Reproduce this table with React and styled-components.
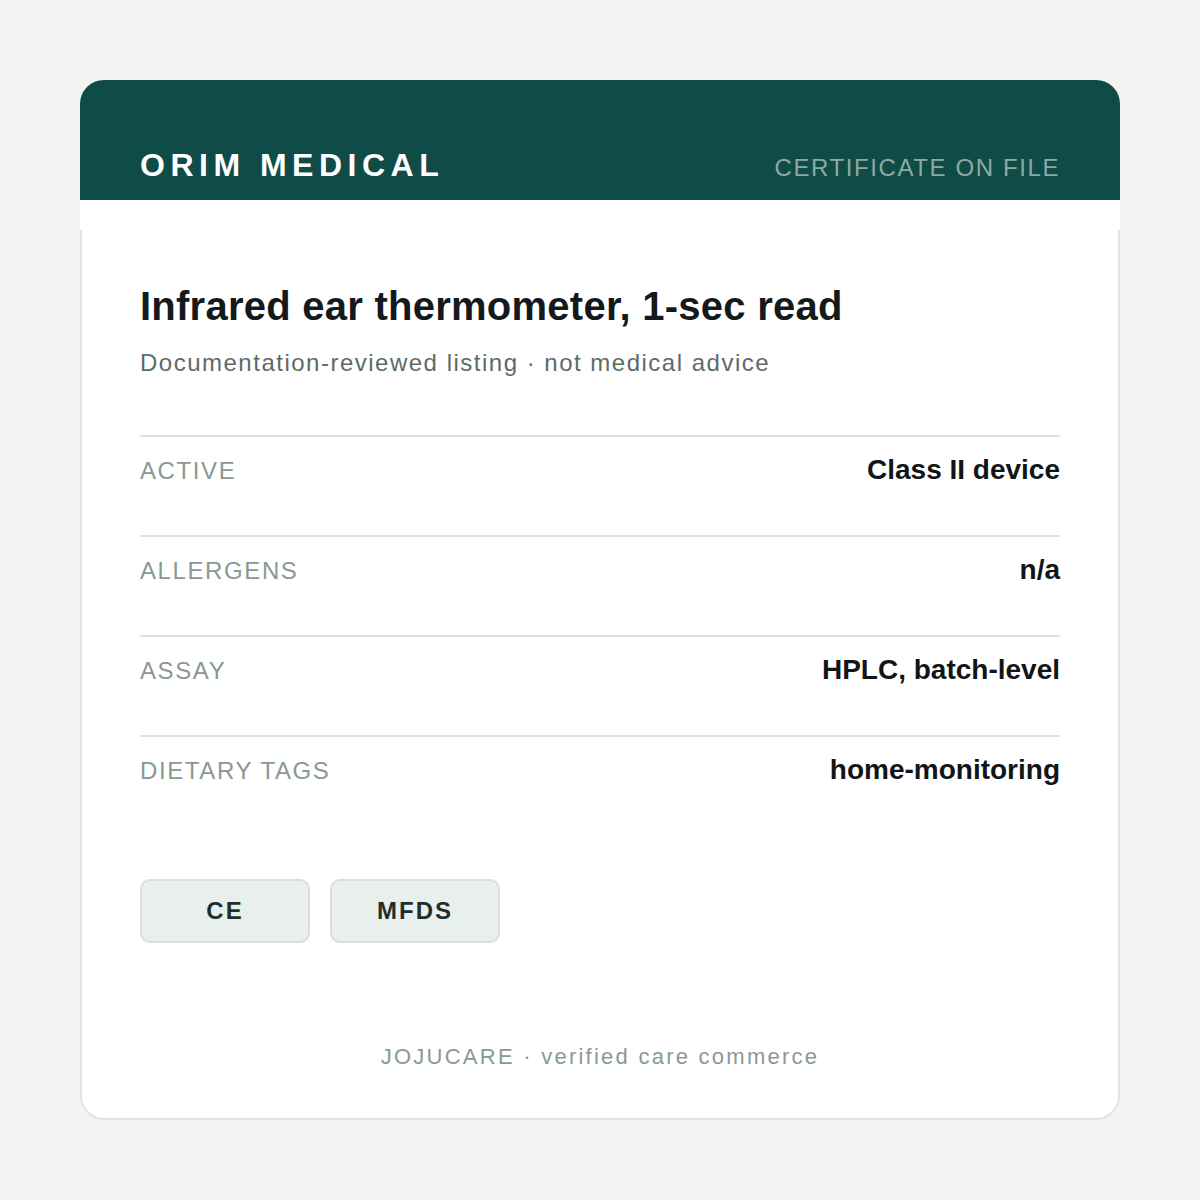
import React from 'react';
import styled, { createGlobalStyle } from 'styled-components';

const GlobalStyle = createGlobalStyle`
  html, body {
    margin: 0;
    padding: 0;
    background: #f4f4f2;
    font-family: "Liberation Sans", Arial, sans-serif;
  }
`;

const Page = styled.div`
  box-sizing: border-box;
  min-height: 1200px;
  padding: 80px;
  background: #f4f4f2;
`;

const Card = styled.div`
  box-sizing: border-box;
  width: 1040px;
  height: 1040px;
  background: #fff;
  border: 2px solid #dfe4e2;
  border-radius: 24px;
  display: flex;
  flex-direction: column;
`;

// sits over the card border; the white shadow hides the border just below it
const Header = styled.header`
  box-sizing: border-box;
  height: 120px;
  margin: -2px -2px 0;
  padding: 69px 60px 0;
  background: #0f4b47;
  border-radius: 24px 24px 0 0;
  box-shadow: 0 30px 0 #fff;
  display: flex;
  align-items: baseline;
  justify-content: space-between;
`;

const Brand = styled.div`
  font-size: 32px;
  line-height: 1;
  font-weight: 700;
  letter-spacing: 5.5px;
  color: #fff;
`;

const Status = styled.div`
  font-size: 24px;
  line-height: 1;
  letter-spacing: 1.6px;
  color: #8ea9a4;
`;

const Body = styled.main`
  flex: 1;
  padding: 82px 58px 0;
  display: flex;
  flex-direction: column;
`;

const Title = styled.h1`
  margin: 0;
  font-size: 40px;
  line-height: 48px;
  font-weight: 700;
  letter-spacing: 0.25px;
  color: #141a1c;
`;

const Subtitle = styled.p`
  margin: 19px 0 0;
  font-size: 24px;
  line-height: 28.8px;
  letter-spacing: 1.5px;
  color: #5c6b67;
`;

const Specs = styled.dl`
  margin: 57px 0 0;
`;

const Row = styled.div`
  box-sizing: border-box;
  height: 100px;
  padding-top: 16px;
  border-top: 2px solid #dde2e0;
  display: flex;
  align-items: baseline;
  justify-content: space-between;
`;

const Label = styled.dt`
  font-size: 24px;
  line-height: 1.2;
  letter-spacing: 1.6px;
  color: #8a9893;
`;

const Value = styled.dd`
  margin: 0;
  font-size: 28px;
  line-height: 1.2;
  font-weight: 700;
  color: #111518;
`;

const Badges = styled.div`
  margin-top: 44px;
  display: flex;
  gap: 20px;
`;

const Badge = styled.span`
  box-sizing: border-box;
  width: 170px;
  height: 64px;
  border: 2px solid #d8dfdc;
  border-radius: 10px;
  background: #e9efed;
  display: flex;
  align-items: center;
  justify-content: center;
  font-size: 24px;
  font-weight: 700;
  letter-spacing: 2px;
  color: #1f2f2c;
`;

const Footer = styled.footer`
  margin-top: auto;
  padding-bottom: 48px;
  text-align: center;
  font-size: 22px;
  line-height: 1.2;
  letter-spacing: 2.25px;
  color: #899a95;
`;

const specs = [
  ['ACTIVE', 'Class II device'],
  ['ALLERGENS', 'n/a'],
  ['ASSAY', 'HPLC, batch-level'],
  ['DIETARY TAGS', 'home-monitoring'],
];

const App = () => (
  <Page>
    <GlobalStyle />
    <Card>
      <Header>
        <Brand>ORIM MEDICAL</Brand>
        <Status>CERTIFICATE ON FILE</Status>
      </Header>
      <Body>
        <Title>Infrared ear thermometer, 1-sec read</Title>
        <Subtitle>Documentation-reviewed listing · not medical advice</Subtitle>
        <Specs>
          {specs.map(([label, value]) => (
            <Row key={label}>
              <Label>{label}</Label>
              <Value>{value}</Value>
            </Row>
          ))}
        </Specs>
        <Badges>
          <Badge>CE</Badge>
          <Badge>MFDS</Badge>
        </Badges>
        <Footer>JOJUCARE · verified care commerce</Footer>
      </Body>
    </Card>
  </Page>
);

export default App;
